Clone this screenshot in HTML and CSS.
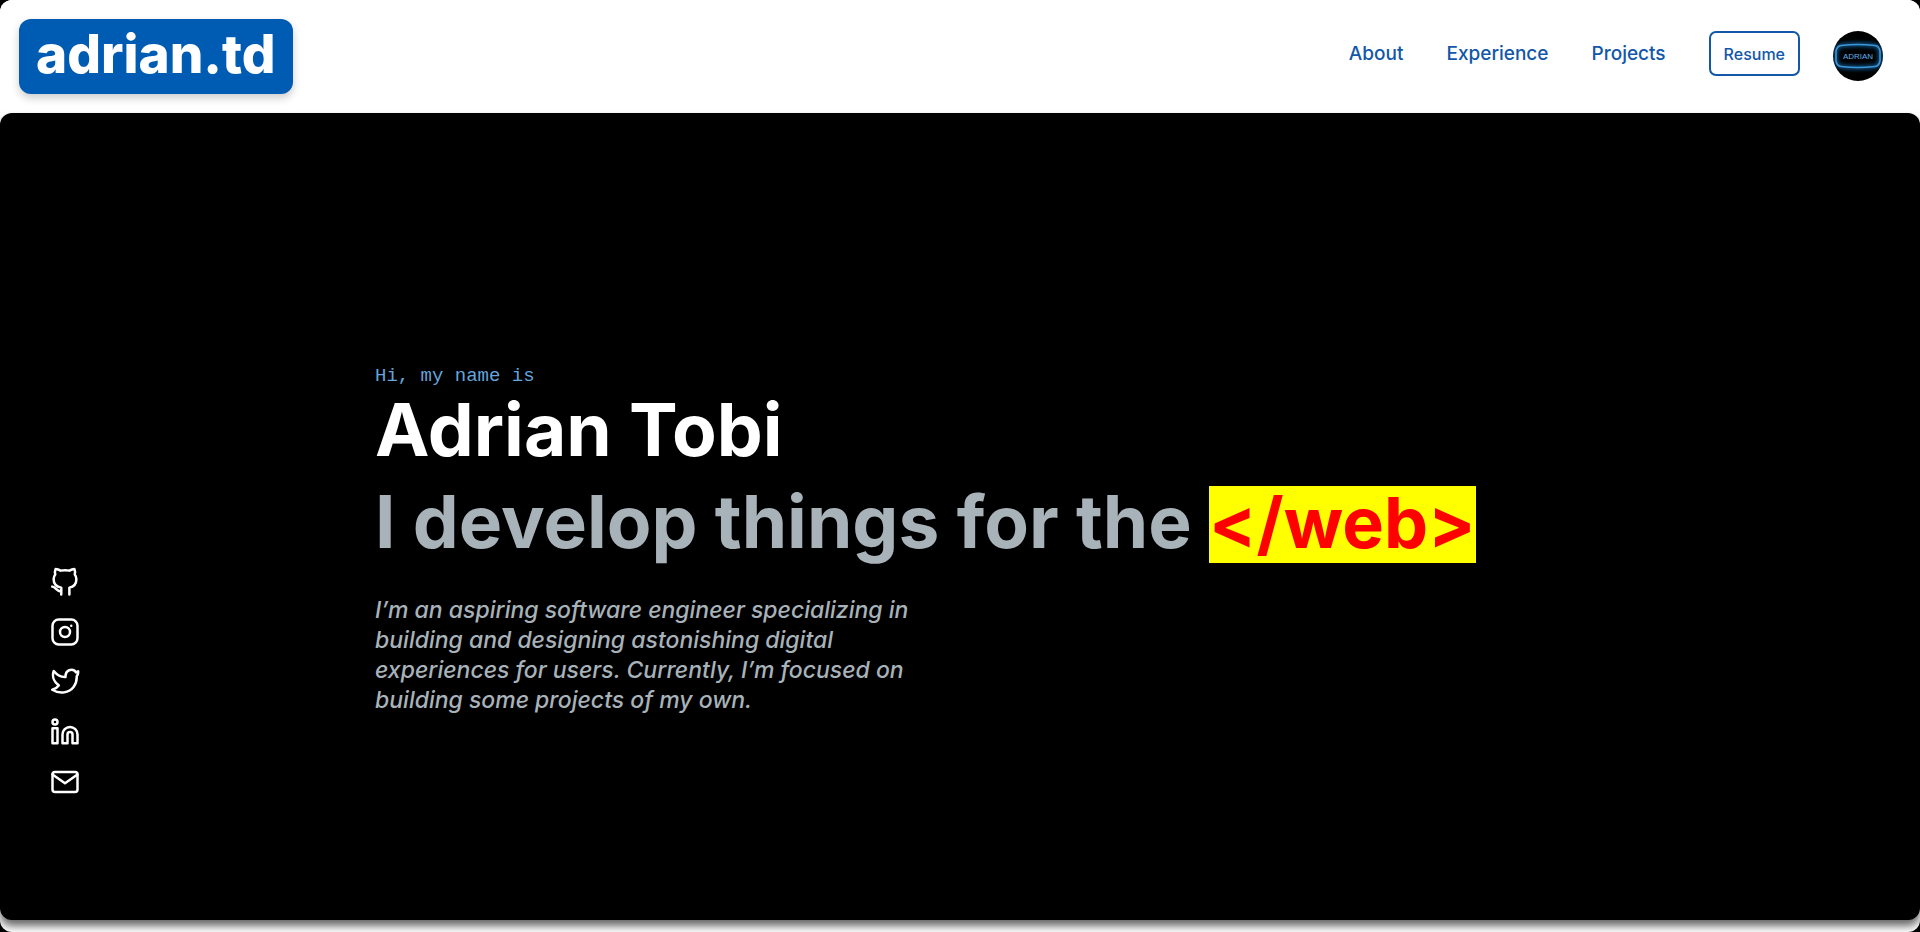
FILE: index.html
```html
<!DOCTYPE html>
<html lang="en">
<head>
<meta charset="utf-8">
<meta name="viewport" content="width=device-width, initial-scale=1">
<title>Adrian Tobi</title>
<link rel="stylesheet" href="styles.css">
</head>
<body>
<div class="page">
  <header class="header">
    <a class="logo" href="#home">adrian.td</a>
    <nav class="nav" aria-label="Main">
      <a class="nav-link" href="#about">About</a>
      <a class="nav-link" href="#experience">Experience</a>
      <a class="nav-link" href="#projects">Projects</a>
      <button class="resume" type="button">Resume</button>
      <a class="avatar" href="#profile" aria-label="Profile">
        <svg viewBox="0 0 50 50" width="50" height="50">
          <defs><filter id="glow" x="-30%" y="-60%" width="160%" height="220%"><feGaussianBlur stdDeviation="2"/></filter></defs>
          <rect width="50" height="50" fill="#000"/>
          <path d="M8 14.500Q25 12.500 42 14.500Q46 15 47 20V30Q46 35 42 35.500Q25 37.500 8 35.500Q4 35 3 30V20Q4 15 8 14.500Z" fill="none" stroke="#1372b8" stroke-width="3" filter="url(#glow)"/>
          <path d="M8 14.500Q25 12.500 42 14.500Q46 15 47 20V30Q46 35 42 35.500Q25 37.500 8 35.500Q4 35 3 30V20Q4 15 8 14.500Z" fill="none" stroke="#3a97dc" stroke-width="1.600"/>
          <text class="avatar-text" x="25" y="28" text-anchor="middle">ADRIAN</text>
        </svg>
      </a>
    </nav>
  </header>
  <main class="hero">
    <ul class="social">
      <li><a href="#github" aria-label="GitHub"><svg class="icon" viewBox="0 0 24 24"><path d="M9 22v-5.500C5.200 15.800 2.900 13.500 2.900 9.800C2.900 8.300 3.400 7 4.200 6C3.800 4.500 3.900 3 4.500 1.500C6 1.500 7.300 2.100 8.500 2.900C10.800 2.400 13.200 2.400 15.500 2.900C16.700 2.100 18 1.500 19.500 1.500C20.100 3 20.200 4.500 19.800 6C20.600 7 21.100 8.300 21.100 9.800C21.100 13.500 19 15.800 15.500 16.500V22M9 19.500C5 19.800 5 16.200 1.800 15.700"/></svg></a></li>
      <li><a href="#instagram" aria-label="Instagram"><svg class="icon" viewBox="0 0 24 24"><rect x="2" y="2" width="20" height="20" rx="5"/><circle cx="12" cy="12" r="4"/><path d="M17 7h.01"/></svg></a></li>
      <li><a href="#twitter" aria-label="Twitter"><svg class="icon" viewBox="0 0 24 24"><path d="M22.500 3.500L20.800 4.300C19.500 2.300 17.300 1.800 15.300 2.600C13.300 3.500 12.300 5.200 12.400 8C8.800 8.200 5.600 6.400 3 3.200C1.500 7.500 3 12 7 14.700C5.500 16.700 3.800 17.700 1.800 18.200C8 22 15.300 20.800 19 15.800C20.800 13.400 21.500 10.500 21.400 7.300C22.200 6.200 22.700 5 22.500 3.500Z"/></svg></a></li>
      <li><a href="#linkedin" aria-label="LinkedIn"><svg class="icon" viewBox="0 0 24 24"><circle cx="4" cy="4" r="2"/><path d="M2 9h4v12H2zM16 8a6 6 0 0 0-6 6v7h4v-7a2 2 0 0 1 4 0v7h4v-7a6 6 0 0 0-6-6z"/></svg></a></li>
      <li><a href="#mail" aria-label="Email"><svg class="icon" viewBox="0 0 24 24"><rect x="2" y="4" width="20" height="16" rx="2"/><path d="M2 6l10 7 10-7"/></svg></a></li>
    </ul>
    <section class="intro">
      <p class="greeting">Hi, my name is</p>
      <h1 class="title">Adrian Tobi</h1>
      <h2 class="title subtitle">I develop things for the <mark class="web">&lt;/web&gt;</mark></h2>
      <p class="bio">I’m an aspiring software engineer specializing in<br>building and designing astonishing digital<br>experiences for users. Currently, I’m focused on<br>building some projects of my own.</p>
    </section>
  </main>
</div>
</body>
</html>
```
FILE: styles.css
```css
* { box-sizing: border-box; }
body {
  margin: 0;
  background: #000;
  font-family: Inter, "Liberation Sans", sans-serif;
}
.page {
  display: flex;
  flex-direction: column;
  min-height: 100vh;
  padding-bottom: 12px;
  background: #fff;
  border-radius: 12px;
  overflow: hidden;
}
.header {
  display: flex;
  justify-content: space-between;
  align-items: flex-start;
  padding: 19px 37px 19px 19px;
  background: #fff;
}
.logo {
  padding: 0 17px 4px;
  border-radius: 12px;
  background: #005bb3;
  box-shadow: 0 4px 8px rgba(0, 0, 0, 0.2);
  color: #fff;
  font-size: 53px;
  font-weight: 800;
  line-height: 71px;
  text-decoration: none;
}
.nav {
  display: flex;
  align-items: flex-start;
  padding-top: 12px;
}
.nav-link {
  margin-right: 43px;
  color: #1257a8;
  font-size: 19px;
  font-weight: 500;
  line-height: 45px;
  text-decoration: none;
}
.resume {
  height: 45px;
  margin-right: 33px;
  padding: 0 13px;
  border: 2px solid #1257a8;
  border-radius: 7px;
  background: #fff;
  color: #1257a8;
  font-family: inherit;
  font-size: 16px;
  font-weight: 500;
}
.avatar {
  width: 50px;
  height: 50px;
  border-radius: 50%;
  overflow: hidden;
}
.avatar svg { display: block; }
.avatar-text {
  fill: #5fb0ea;
  font-family: "Liberation Sans", sans-serif;
  font-size: 8px;
}
.hero {
  display: flex;
  flex: 1;
  align-items: flex-end;
  border-radius: 12px;
  background: #000;
  box-shadow: 0 6px 8px rgba(0, 0, 0, 0.6);
  color: #a8b2b9;
}
.social {
  display: flex;
  flex-direction: column;
  gap: 20px;
  margin: 0;
  padding: 0 0 123px 50px;
  list-style: none;
}
.social a { display: block; }
.icon {
  display: block;
  width: 30px;
  height: 30px;
  fill: none;
  stroke: #fff;
  stroke-width: 2;
  stroke-linecap: round;
  stroke-linejoin: round;
}
.intro { padding: 0 0 205px 295px; }
.greeting {
  margin: 0;
  color: #64a5dc;
  font-family: "Liberation Mono", monospace;
  font-size: 19px;
  line-height: 16px;
}
.title {
  margin: 0;
  color: #fff;
  font-size: 73px;
  font-weight: 700;
  line-height: 92px;
}
.subtitle { color: #a8b2b9; }
.web {
  display: inline-block;
  padding-bottom: 4px;
  background: #ff0;
  color: #f00;
  font-size: 70px;
  line-height: 73px;
}
.bio {
  margin: 27px 0 0;
  font-size: 23px;
  font-style: italic;
  font-weight: 500;
  line-height: 30px;
}
```
